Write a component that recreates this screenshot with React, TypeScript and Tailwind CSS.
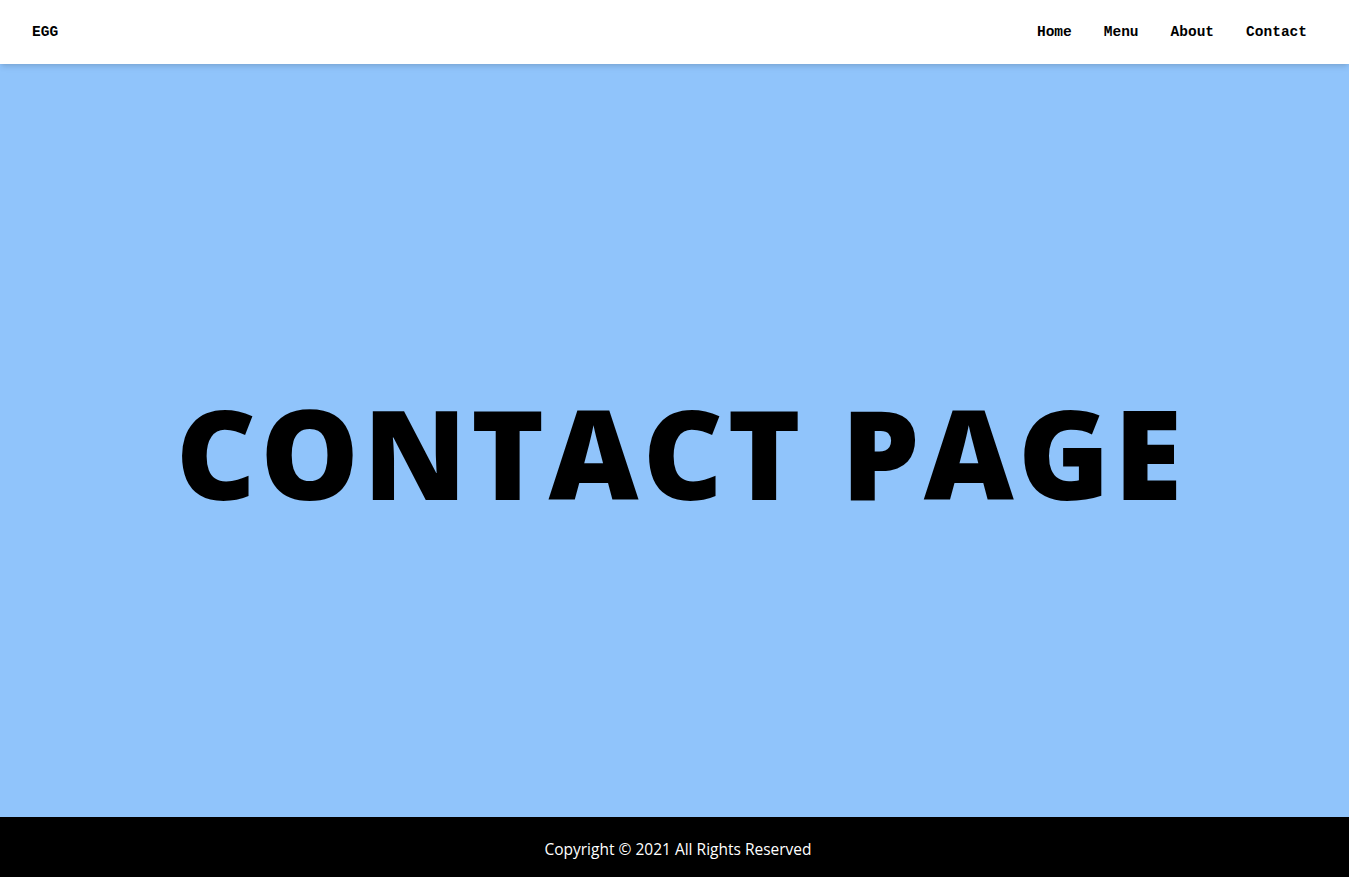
export default function App() {
  const links = ['Home', 'Menu', 'About', 'Contact'];

  return (
    <div className="flex min-h-screen flex-col bg-[#90c4fb]">
      <header className="relative z-10 flex h-16 items-center justify-between bg-white pl-8 pr-[42px] pt-px shadow-md">
        <span className="font-['Liberation_Mono',monospace] text-[14.5px] font-bold text-black">EGG</span>
        <nav className="flex items-center gap-8">
          {links.map((link) => (
            <a key={link} href="#" className="font-['Liberation_Mono',monospace] text-[14.5px] font-bold text-black">
              {link}
            </a>
          ))}
        </nav>
      </header>

      <main className="flex flex-1 items-center justify-center pl-[13px] pt-[23px]">
        <h1 className="font-['Open_Sans',sans-serif] text-[124px] font-extrabold leading-none tracking-[0.034em] text-black">
          CONTACT PAGE
        </h1>
      </main>

      <footer className="flex h-[60px] items-center justify-center bg-black pl-[7px] pt-1.5">
        <p className="font-['Open_Sans',sans-serif] text-[15.5px] text-white">Copyright © 2021 All Rights Reserved</p>
      </footer>
    </div>
  );
}
